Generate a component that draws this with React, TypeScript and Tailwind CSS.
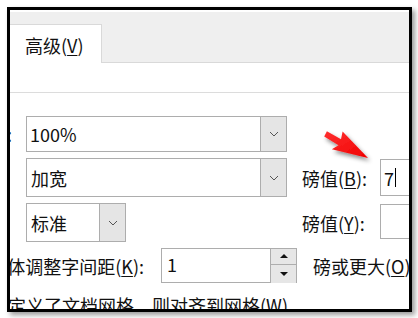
import React from "react";

const Chevron = () => (
  <svg width="10" height="6" viewBox="0 0 10 6">
    <polyline points="1,1 5,5 9,1" fill="none" stroke="#555" strokeWidth="1" />
  </svg>
);

const DropButton = ({ w }: { w: string }) => (
  <div className={`${w} h-full bg-[#e5e5e5] border-l border-[#adadad] flex items-center justify-center`}>
    <Chevron />
  </div>
);

const Spinner = () => (
  <div className="w-[26px] h-[34px] flex flex-col border-l border-[#adadad]">
    <div className="h-[16px] bg-[#e6e6e6] border-b border-[#adadad] flex items-center justify-center">
      <svg width="10" height="6" viewBox="0 0 10 6">
        <polygon points="1,5 5,1 9,5" fill="#111" />
      </svg>
    </div>
    <div className="flex-1 bg-[#e6e6e6] flex items-center justify-center">
      <svg width="10" height="6" viewBox="0 0 10 6">
        <polygon points="1,1 5,5 9,1" fill="#111" />
      </svg>
    </div>
  </div>
);

// arrow drawn in page coords offset by (320,125)
const RedArrow = () => (
  <svg className="absolute left-[310px] top-[115px]" width="62" height="48" viewBox="0 0 62 48">
    <defs>
      <linearGradient id="rg" x1="0" y1="0" x2="1" y2="1">
        <stop offset="0" stopColor="#ff3030" />
        <stop offset="1" stopColor="#f00000" />
      </linearGradient>
      <filter id="sh" x="-30%" y="-30%" width="160%" height="160%">
        <feDropShadow dx="2" dy="3" stdDeviation="2" floodColor="#000" floodOpacity="0.45" />
      </filter>
    </defs>
    <polygon
      points="6.9,6.2 21,14.3 22.6,6.5 48,33 11.9,24.2 18.5,20.3 4.2,11.5"
      fill="url(#rg)"
      filter="url(#sh)"
    />
  </svg>
);

export default function App() {
  return (
    <div className="w-[418px] h-[318px] bg-white pt-[7px] pl-[7px] font-['Noto_Sans_CJK_SC',sans-serif] text-[#111] text-[18px]">
      <div className="relative w-[405px] h-[305px] border-[3px] border-black bg-white overflow-hidden shadow-[3px_3px_5px_rgba(0,0,0,0.4)]">
        <div className="h-[2px]" />
        {/* tab strip */}
        <div className="h-[51px] bg-[#efefef] border-b border-[#d9d9d9] flex items-end">
          <div className="w-[92px] h-[39px] -mb-px bg-white border-t border-r border-[#d9d9d9] pt-[7px] pl-[15px] leading-[26px] whitespace-nowrap">
            高级(<span className="underline underline-offset-2">V</span>)
          </div>
        </div>
        <div className="h-[30px] border-b border-[#dcdcdc]" />

        {/* row 1 */}
        <div className="mt-[23px] flex h-[36px] items-center">
          <div className="w-[16px] shrink-0 flex justify-end pr-[14px]">
            <span className="shrink-0 whitespace-nowrap leading-[26px]">缩放(C):</span>
          </div>
          <div className="w-[261px] h-[36px] shrink-0 border border-[#adadad] flex items-center">
            <div className="flex-1 pl-[3px] leading-[26px]">100%</div>
            <DropButton w="w-[26px]" />
          </div>
        </div>

        {/* row 2 */}
        <div className="mt-[6px] flex h-[39px] items-center">
          <div className="w-[16px] shrink-0" />
          <div className="w-[261px] h-[39px] shrink-0 border border-[#adadad] flex items-center">
            <div className="flex-1 pl-[4px] leading-[26px]">加宽</div>
            <DropButton w="w-[26px]" />
          </div>
          <div className="ml-[15px] w-[78px] shrink-0 whitespace-nowrap leading-[26px]">
            磅值(<span className="underline underline-offset-2">B</span>):
          </div>
          <div className="w-[60px] h-[37px] shrink-0 border border-[#adadad] flex items-center pl-[3px] leading-[26px]">
            7<span className="ml-[1px] inline-block w-px h-[19px] bg-black" />
          </div>
        </div>

        {/* row 3 */}
        <div className="mt-[6px] flex h-[39px] items-start">
          <div className="w-[16px] shrink-0" />
          <div className="w-[100px] h-[39px] shrink-0 border border-[#adadad] flex items-center">
            <div className="flex-1 pl-[4px] leading-[26px]">标准</div>
            <DropButton w="w-[26px]" />
          </div>
          <div className="ml-[176px] w-[78px] shrink-0 self-center whitespace-nowrap leading-[26px]">
            磅值(<span className="underline underline-offset-2">Y</span>):
          </div>
          <div className="mt-[1px] w-[60px] h-[35px] shrink-0 border border-[#adadad]" />
        </div>

        {/* row 4 */}
        <div className="mt-[6px] flex h-[35px] items-center">
          <div className="w-[151px] shrink-0 flex justify-end pr-[17px]">
            <span className="shrink-0 whitespace-nowrap leading-[26px]">
              为字体调整字间距(<span className="underline underline-offset-2">K</span>):
            </span>
          </div>
          <div className="w-[136px] h-[35px] shrink-0 border border-[#adadad] flex items-center">
            <div className="flex-1 pl-[5px] leading-[26px] -mt-[3px]">1</div>
            <Spinner />
          </div>
          <div className="ml-[16px] shrink-0 whitespace-nowrap leading-[26px]">
            磅或更大(<span className="underline underline-offset-2">O</span>)
          </div>
        </div>

        {/* row 5 */}
        <div className="mt-[9px] -ml-[2px] whitespace-nowrap leading-[26px]">
          定义了文档网格，则对齐到网格(<span className="underline underline-offset-2">W</span>)
        </div>

        <RedArrow />
      </div>
    </div>
  );
}
